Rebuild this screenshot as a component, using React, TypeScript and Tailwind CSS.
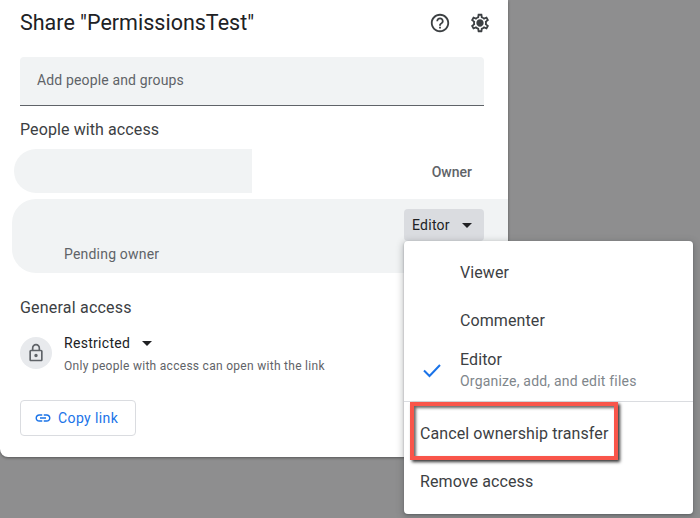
import React from 'react';

const caret = (
  <svg width="10" height="5" viewBox="0 0 10 5" className="fill-[#202124]">
    <path d="M0 0l5 5 5-5z" />
  </svg>
);

function MenuItem({ label, className }: { label: string; className: string }) {
  return <div className={`flex items-center text-[16px] tracking-[0.1px] text-[#3c4043] ${className}`}>{label}</div>;
}

export default function App() {
  return (
    <div className="relative h-[518px] w-[700px] overflow-hidden bg-[#8e8e8f] font-['Roboto',sans-serif]">
      <div className="relative h-[457px] w-[508px] rounded-bl-lg bg-white px-5 shadow-[0_1px_3px_rgba(0,0,0,0.4)]">
        <div className="flex h-[46px] items-center justify-between">
          <h1 className="pt-px text-[21.5px] font-normal text-[#202124]">Share "PermissionsTest"</h1>
          <div className="-mr-[3px] flex items-center gap-[18px]">
            <svg width="22" height="22" viewBox="0 0 24 24" className="fill-[#3c4043]">
              <path d="M11 18h2v-2h-2v2zm1-16C6.48 2 2 6.48 2 12s4.48 10 10 10 10-4.48 10-10S17.52 2 12 2zm0 18c-4.41 0-8-3.59-8-8s3.59-8 8-8 8 3.59 8 8-3.59 8-8 8zm0-14c-2.21 0-4 1.79-4 4h2c0-1.1.9-2 2-2s2 .9 2 2c0 2-3 1.75-3 5h2c0-2.25 3-2.5 3-5 0-2.21-1.79-4-4-4z" />
            </svg>
            <svg width="22" height="22" viewBox="0 0 24 24" className="fill-[#3c4043]">
              <path d="M19.43 12.98c.04-.32.07-.64.07-.98 0-.34-.03-.66-.07-.98l2.11-1.65c.19-.15.24-.42.12-.64l-2-3.46c-.09-.16-.26-.25-.44-.25-.06 0-.12.01-.17.03l-2.49 1c-.52-.4-1.08-.73-1.69-.98l-.38-2.65C14.46 2.18 14.25 2 14 2h-4c-.25 0-.46.18-.49.42l-.38 2.65c-.61.25-1.17.59-1.69.98l-2.49-1c-.06-.02-.12-.03-.18-.03-.17 0-.34.09-.43.25l-2 3.46c-.13.22-.07.49.12.64l2.11 1.65c-.04.32-.07.65-.07.98 0 .33.03.66.07.98l-2.11 1.65c-.19.15-.24.42-.12.64l2 3.46c.09.16.26.25.44.25.06 0 .12-.01.17-.03l2.49-1c.52.4 1.08.73 1.69.98l.38 2.65c.03.24.24.42.49.42h4c.25 0 .46-.18.49-.42l.38-2.65c.61-.25 1.17-.59 1.69-.98l2.49 1c.06.02.12.03.18.03.17 0 .34-.09.43-.25l2-3.46c.12-.22.07-.49-.12-.64l-2.11-1.65zm-1.98-1.71c.04.31.05.52.05.73 0 .21-.02.43-.05.73l-.14 1.13.89.7 1.08.84-.7 1.21-1.27-.51-1.04-.42-.9.68c-.43.32-.84.56-1.25.73l-1.06.43-.16 1.13-.2 1.35h-1.4l-.19-1.35-.16-1.13-1.06-.43c-.43-.18-.83-.41-1.23-.71l-.91-.7-1.06.43-1.27.51-.7-1.21 1.08-.84.89-.7-.14-1.13c-.03-.31-.05-.54-.05-.74s.02-.43.05-.73l.14-1.13-.89-.7-1.08-.84.7-1.21 1.27.51 1.04.42.9-.68c.43-.32.84-.56 1.25-.73l1.06-.43.16-1.13.2-1.35h1.39l.19 1.35.16 1.13 1.06.43c.43.18.83.41 1.23.71l.91.7 1.06-.43 1.27-.51.7 1.21-1.07.85-.89.7.14 1.13zM12 8c-2.21 0-4 1.79-4 4s1.79 4 4 4 4-1.79 4-4-1.79-4-4-4z" />
            </svg>
          </div>
        </div>

        <div className="mt-[11px] flex h-[49px] w-[464px] items-center rounded-t-[4px] border-b border-[#5f6368] bg-[#f1f3f4] pb-[2px] pl-[17px] text-[14px] tracking-[0.15px] text-[#5f6368]">
          Add people and groups
        </div>

        <h2 className="mt-[12px] text-[16px] leading-[24px] font-normal tracking-[0.1px] text-[#3c4043]">People with access</h2>

        <div className="-ml-[6px] mt-[7px] flex h-[44px] w-[470px] items-center">
          <div className="h-full w-[238px] rounded-l-[22px] bg-[#f1f3f4]" />
          <span className="ml-auto pt-[2px] pr-[12px] text-[14px] font-medium text-[#5f6368]">Owner</span>
        </div>

        <div className="-ml-[8px] mt-[6px] flex h-[74px] w-[496px] items-start justify-between rounded-l-[24px] bg-[#f1f3f4]">
          <span className="mt-[46px] ml-[52px] text-[14px] leading-[18px] tracking-[0.2px] text-[#5f6368]">Pending owner</span>
          <div className="mt-[10px] mr-[24px] flex h-[32px] w-[80px] items-center rounded-[4px] bg-[#dadce0] pl-[8px] text-[14px] tracking-[0.25px] text-[#202124]">
            Editor
            <span className="ml-[12px] flex">{caret}</span>
          </div>
        </div>

        <h2 className="mt-[23px] text-[16px] leading-[24px] font-normal tracking-[0.2px] text-[#3c4043]">General access</h2>

        <div className="mt-[17px] flex items-start gap-[12px]">
          <div className="flex h-[32px] w-[32px] items-center justify-center rounded-full bg-[#e8eaed]">
            <svg width="20" height="20" viewBox="0 0 24 24" className="fill-[#5f6368]">
              <path d="M18 8h-1V6c0-2.76-2.24-5-5-5S7 3.24 7 6v2H6c-1.1 0-2 .9-2 2v10c0 1.1.9 2 2 2h12c1.1 0 2-.9 2-2V10c0-1.1-.9-2-2-2zM9 6c0-1.66 1.34-3 3-3s3 1.34 3 3v2H9V6zm9 14H6V10h12v10zm-6-3c1.1 0 2-.9 2-2s-.9-2-2-2-2 .9-2 2 .9 2 2 2z" />
            </svg>
          </div>
          <div>
            <div className="-mt-[3px] flex h-[18px] items-center text-[14px] tracking-[0.3px] text-[#202124]">
              Restricted
              <span className="ml-[12px] flex">{caret}</span>
            </div>
            <div className="mt-[6px] text-[12px] leading-[16px] tracking-[0.29px] text-[#5f6368]">Only people with access can open with the link</div>
          </div>
        </div>

        <div className="mt-[26px] flex items-center justify-between">
          <button className="flex h-[36px] w-[116px] items-center rounded-[4px] border border-[#dadce0] pl-[13px] text-[14px] tracking-[0.4px] text-[#1a73e8]">
            <svg width="18" height="18" viewBox="0 0 24 24" className="fill-[#1a73e8]">
              <path d="M3.9 12c0-1.71 1.39-3.1 3.1-3.1h4V7H7c-2.76 0-5 2.24-5 5s2.24 5 5 5h4v-1.9H7c-1.71 0-3.1-1.39-3.1-3.1zM8 13h8v-2H8v2zm9-6h-4v1.9h4c1.71 0 3.1 1.39 3.1 3.1s-1.39 3.1-3.1 3.1h-4V17h4c2.76 0 5-2.24 5-5s-2.24-5-5-5z" />
            </svg>
            <span className="ml-[6px]">Copy link</span>
          </button>
          <div className="h-[36px] w-[83px] rounded-[4px] bg-[#1a73e8]" />
        </div>
      </div>

      {/* dropdown sits over the dialog */}
      <div className="absolute top-[241px] left-[404px] w-[289px] rounded-[4px] bg-white pt-px shadow-[0_2px_6px_2px_rgba(60,64,67,0.25),0_1px_2px_rgba(60,64,67,0.4)]">
        <MenuItem label="Viewer" className="h-[48px] pt-[14px] pl-[56px]" />
        <MenuItem label="Commenter" className="h-[48px] pt-[14px] pl-[56px]" />
        <div className="flex h-[64px] items-center border-b border-[#dadce0]">
          <svg width="24" height="24" viewBox="0 0 24 24" fill="none" className="ml-[16px] stroke-[#1a73e8] stroke-[2px]">
            <path d="M4 12.5l5.5 5.5L20 7" />
          </svg>
          <div className="ml-[16px]">
            <div className="text-[16px] leading-[20px] tracking-[0.1px] text-[#3c4043]">Editor</div>
            <div className="mt-[2px] text-[14px] leading-[18px] tracking-[0.2px] text-[#80868b]">Organize, add, and edit files</div>
          </div>
        </div>
        <MenuItem label="Cancel ownership transfer" className="h-[48px] pl-[16px] pt-[15px]" />
        <MenuItem label="Remove access" className="h-[64px] pl-[16px]" />
      </div>

      {/* red annotation box */}
      <div className="absolute top-[402px] left-[410px] h-[58px] w-[208px] border-[4px] border-[#f9554a] shadow-[2px_2px_3px_rgba(0,0,0,0.8),inset_2px_2px_3px_rgba(0,0,0,0.6)]" />
    </div>
  );
}
